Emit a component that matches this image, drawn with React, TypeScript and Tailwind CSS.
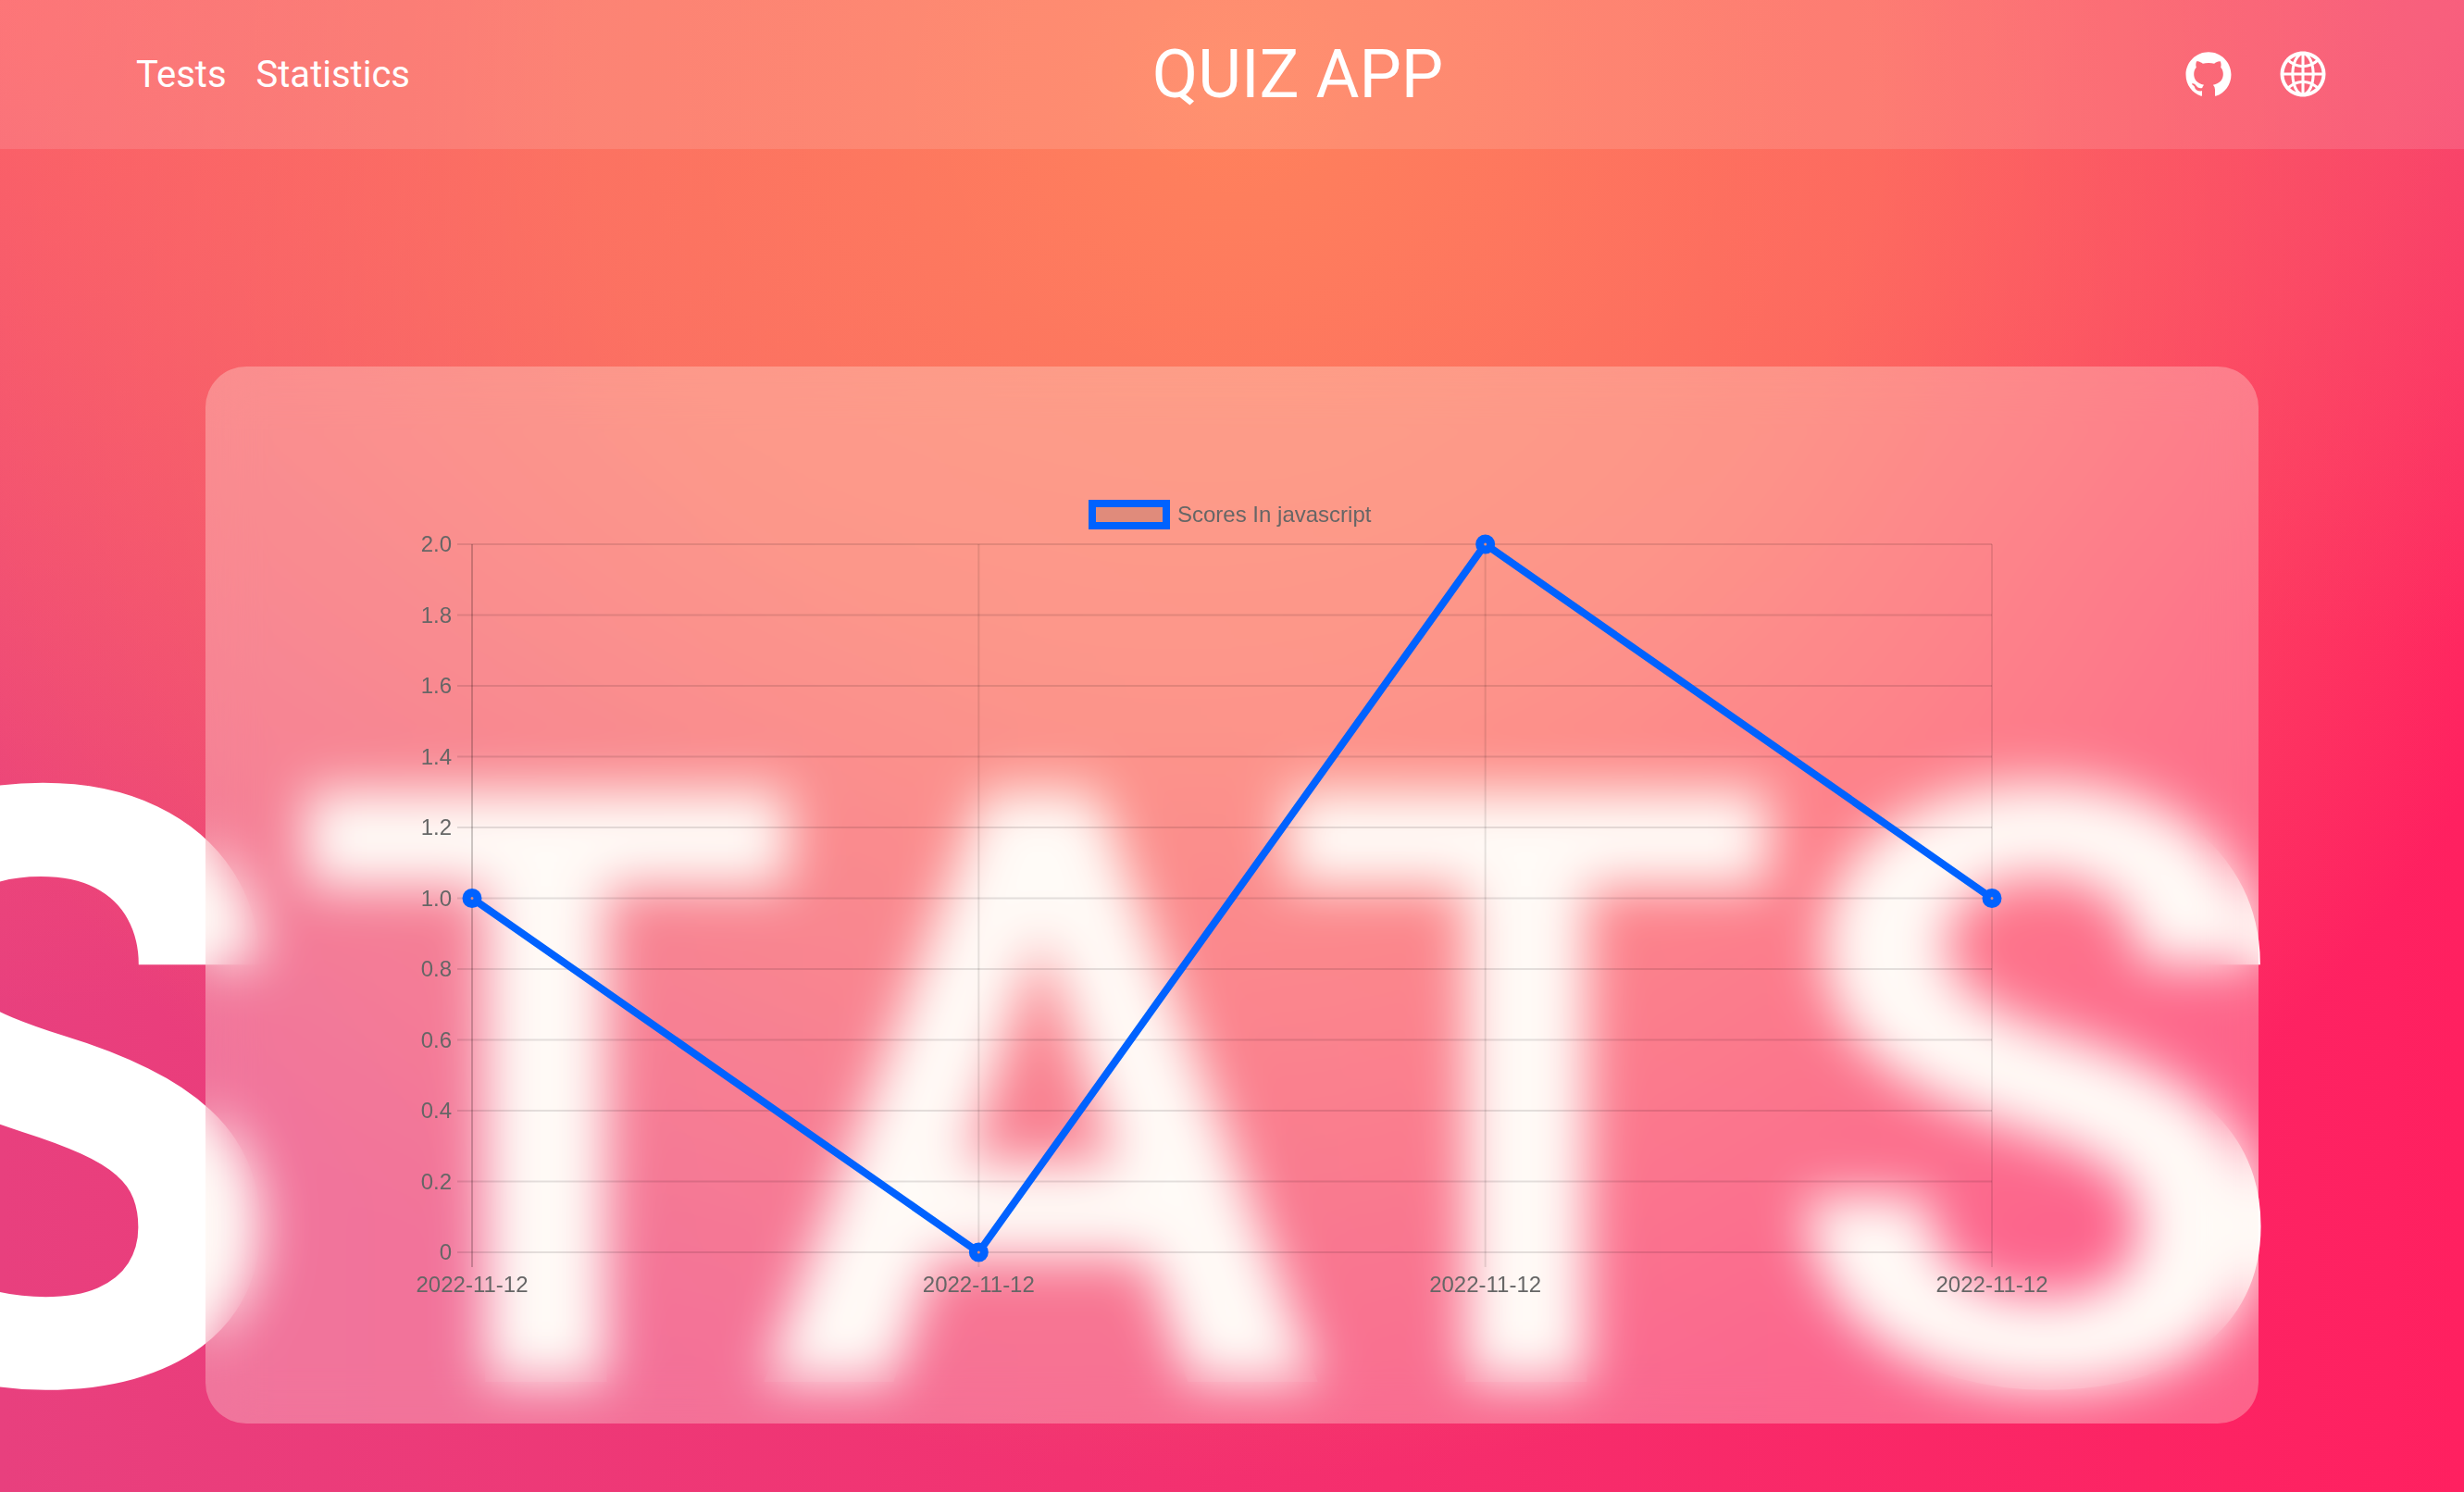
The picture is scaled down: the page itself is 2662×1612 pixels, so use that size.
import React from 'react';
import { AiFillGithub, AiOutlineGlobal } from 'react-icons/ai';

const labels = ['2022-11-12', '2022-11-12', '2022-11-12', '2022-11-12'];
const scores = [1, 0, 2, 1];
const yTicks = ['2.0', '1.8', '1.6', '1.4', '1.2', '1.0', '0.8', '0.6', '0.4', '0.2', '0'];

// chart geometry, relative to the card
const left = 288;
const right = 1930;
const top = 192;
const bottom = 957;
const xAt = (i: number) => left + ((right - left) / (labels.length - 1)) * i;
const yAt = (v: number) => bottom - ((bottom - top) / 2) * v;

const ScoreChart = () => {
  const points = scores.map((s, i) => `${xAt(i)},${yAt(s)}`).join(' ');
  return (
    <svg viewBox="0 0 2218 1142" className="block w-full h-full" style={{ fontFamily: '"Liberation Sans", Arial, sans-serif' }}>
      {/* legend */}
      <rect x={958} y={148} width={80} height={24} fill="#e08b7b" stroke="#0062ff" strokeWidth={8} />
      <text x={1050} y={168} fontSize={24} fill="#666">Scores In javascript</text>

      {/* horizontal grid and y ticks */}
      {yTicks.map((t, i) => {
        const y = top + ((bottom - top) / 10) * i;
        return (
          <g key={i}>
            <line x1={left - 16} x2={right} y1={y} y2={y} stroke="rgba(0,0,0,0.11)" strokeWidth={2} />
            <text x={left - 22} y={y + 8} fontSize={24} fill="#666" textAnchor="end">{t}</text>
          </g>
        );
      })}

      {/* vertical grid and x labels */}
      {labels.map((l, i) => (
        <g key={i}>
          <line x1={xAt(i)} x2={xAt(i)} y1={top} y2={bottom + 16} stroke={i === 0 ? 'rgba(0,0,0,0.2)' : 'rgba(0,0,0,0.1)'} strokeWidth={2} />
          <text x={xAt(i)} y={1000} fontSize={24} fill="#666" textAnchor="middle">{l}</text>
        </g>
      ))}

      {/* data line */}
      <polyline points={points} fill="none" stroke="#0062ff" strokeWidth={8} />
      {scores.map((s, i) => (
        <circle key={i} cx={xAt(i)} cy={yAt(s)} r={6} fill="#e08b7b" stroke="#0062ff" strokeWidth={9} />
      ))}
    </svg>
  );
};

export default function App() {
  return (
    <div
      className="relative h-[1612px] overflow-hidden font-['Roboto',sans-serif] bg-[radial-gradient(ellipse_1550px_1500px_at_50%_6%,rgba(255,130,92,1),rgba(255,130,92,0.72)_45%,rgba(255,130,92,0)),radial-gradient(ellipse_1300px_1100px_at_0%_0%,rgba(252,92,104,1),rgba(252,92,104,0)),radial-gradient(ellipse_900px_700px_at_100%_0%,rgba(245,60,112,1),rgba(245,60,112,0)),linear-gradient(to_right,#e8407e,#ff2060)]"
    >
      {/* big word behind the card */}
      <div className="absolute left-[-240px] top-[737px] text-white text-[898px] font-bold leading-none whitespace-nowrap">
        STATS
      </div>

      {/* Header */}
      <header className="relative flex items-center justify-between h-[161px] pl-[147px] pr-[146px] bg-white/[0.12] text-white">
        <nav className="flex items-center gap-[32px] text-[40px]">
          <span>Tests</span>
          <span>Statistics</span>
        </nav>
        <h1 className="text-[72px] font-normal ml-[3px]">QUIZ APP</h1>
        <div className="flex items-center gap-[46px] text-[56px] mb-[2px]">
          <AiFillGithub />
          <AiOutlineGlobal />
        </div>
      </header>

      {/* Chart card */}
      <main className="relative w-[2218px] h-[1142px] mx-auto mt-[235px] rounded-[44px] bg-[rgba(255,241,228,0.31)] backdrop-blur-[28px]">
        <ScoreChart />
      </main>
    </div>
  );
}
